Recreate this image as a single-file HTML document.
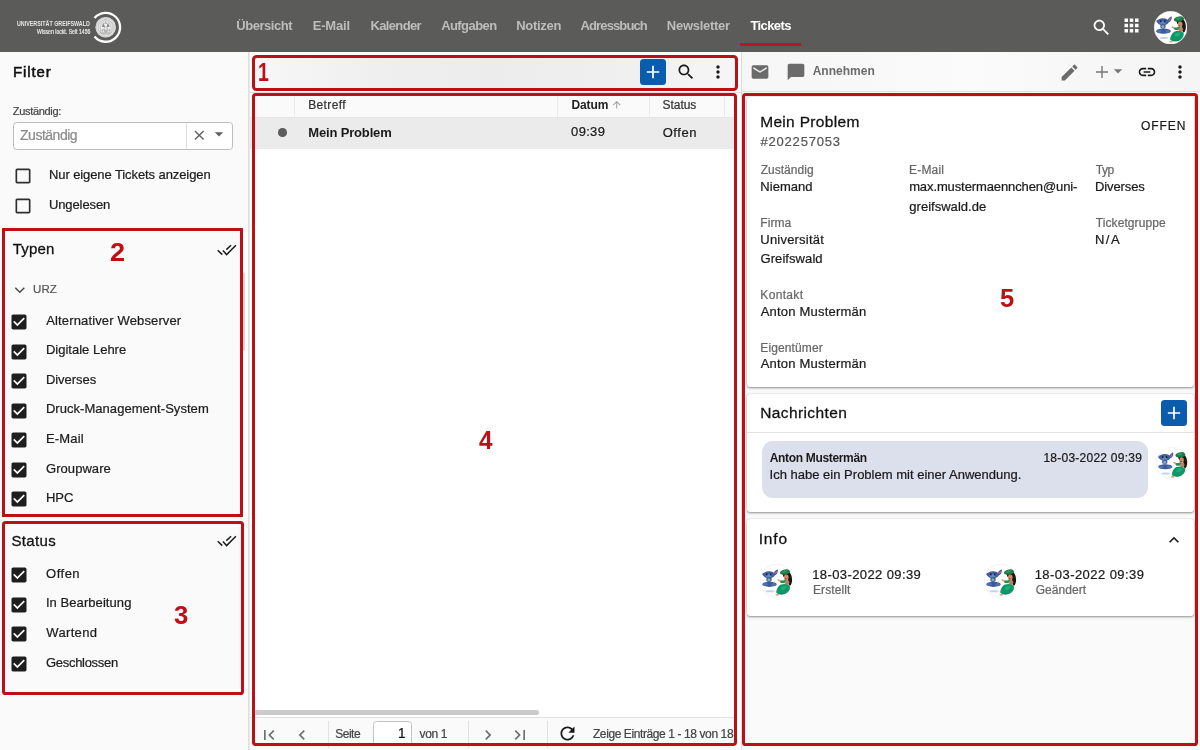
<!DOCTYPE html>
<html lang="de"><head><meta charset="utf-8"><title>Tickets</title>
<style>
*{box-sizing:border-box;margin:0;padding:0}
html,body{width:1200px;height:750px;overflow:hidden;background:#fafafa;font-family:"Liberation Sans",sans-serif;color:#1a1a1a}
.abs{position:absolute}
.t{position:absolute;white-space:pre;line-height:1;-webkit-text-stroke:.22px currentColor}
.t.b{-webkit-text-stroke:0}
.rbox{position:absolute;border:3px solid #be0f17;border-radius:4.5px}
.card{position:absolute;background:#fff;border-radius:3px;box-shadow:0 1px 2.5px rgba(0,0,0,.42),0 0 1px rgba(0,0,0,.25)}
.vline{position:absolute;width:1px;background:#e4e4e4}
</style></head><body>

<div class="abs" style="left:0;top:0;width:1200px;height:51.5px;background:#5b5b5a;box-shadow:0 1px 2px rgba(0,0,0,.35)"></div>
<div class="abs" style="left:740px;top:43px;width:60.5px;height:3px;background:#bc151c"></div>
<svg class="abs" style="left:90px;top:10px" width="36" height="36" viewBox="0 0 36 36">
<defs><filter id="sb" x="-10%" y="-10%" width="120%" height="120%"><feGaussianBlur stdDeviation=".28"/></filter></defs>
<path d="M4.5 8.1 A14.45 14.45 0 1 1 4.5 26.5" fill="none" stroke="#fbfbfb" stroke-width="2.350"/>
<g transform="translate(15.700 17.300)" filter="url(#sb)">
<circle r="10.250" fill="#eeeeee"/>
<circle r="9.200" fill="none" stroke="#b9b9b9" stroke-width="1.100" stroke-dasharray=".7 .55"/>
<circle r="7.700" fill="#e2e2e2" stroke="#9c9c9c" stroke-width=".5"/>
<path d="M-5.200 5.600 L-5.200 -.6 Q-4.600 -5.200 0 -7.400 Q4.600 -5.200 5.200 -.6 L5.200 5.600 Z" fill="#f3f3f3" stroke="#9a9a9a" stroke-width=".45"/>
<path d="M-4 -.4 L-2.300 -4.800 L-.7 -.4 Z M.7 -.4 L2.300 -4.800 L4 -.4 Z" fill="#8c8c8c"/>
<path d="M-1.500 -3.600 L0 -6.600 L1.500 -3.600 Z" fill="#a2a2a2"/>
<ellipse cx="0" cy="2.300" rx="2.300" ry="3.100" fill="#b5b5b5"/>
<ellipse cx="0" cy="1.200" rx="1.100" ry="1.300" fill="#f4f4f4"/>
<path d="M-4.600 3 L-3 1 L-3 5.400 Z M4.600 3 L3 1 L3 5.400 Z" fill="#a8a8a8"/>
<path d="M-4.800 5.800 H4.800" stroke="#999" stroke-width=".6"/>
</g>
</svg>
<svg class="abs" style="left:1091.20px;top:17.40px" width="21" height="21" viewBox="0 0 24 24"><path fill="#fff" d="M15.5 14h-.79l-.28-.27C15.41 12.59 16 11.11 16 9.5 16 5.91 13.09 3 9.5 3S3 5.91 3 9.5 5.91 16 9.5 16c1.61 0 3.09-.59 4.23-1.57l.27.28v.79l5 4.99L20.49 19l-4.99-5zm-6 0C7.01 14 5 11.99 5 9.5S7.01 5 9.5 5 14 7.01 14 9.5 11.99 14 9.5 14z"/></svg>
<svg class="abs" style="left:1120.60px;top:15.00px" width="21" height="21" viewBox="0 0 24 24"><path fill="#fff" d="M4 8h4V4H4v4zm6 12h4v-4h-4v4zm-6 0h4v-4H4v4zm0-6h4v-4H4v4zm6 0h4v-4h-4v4zm6-10v4h4V4h-4zm-6 4h4V4h-4v4zm6 6h4v-4h-4v4zm0 6h4v-4h-4v4z"/></svg>
<svg class="abs" style="left:1153.9px;top:11px" width="33.2" height="33.2" viewBox="0 0 40 40">
<defs><clipPath id="av1"><circle cx="20" cy="20" r="19.6"/></clipPath><filter id="av1b" x="-10%" y="-10%" width="120%" height="120%"><feGaussianBlur stdDeviation=".32"/></filter></defs>
<circle cx="20" cy="20" r="19.8" fill="#fff" stroke="#e9e9e9" stroke-width=".7"/>
<g clip-path="url(#av1)"><g transform="translate(-4.64,-3.55) scale(1.205)" filter="url(#av1b)">
<path d="M17 14.2 Q17.6 9.600 21.300 8.200 Q22.400 10.800 19.600 13.900 Z" fill="#5a5490"/>
<path d="M18.200 13.200 Q18.800 10.400 20.800 9.300 Q21.200 11.200 19.300 13.200 Z" fill="#8d6da3"/>
<path d="M8.600 12.200 Q6.600 10.800 6.100 13.300 Q7.400 15 9 14.300 Z" fill="#48599a"/>
<ellipse cx="12.800" cy="13.600" rx="5.900" ry="3.500" fill="#3f5f9c"/>
<ellipse cx="12.400" cy="14.700" rx="3" ry="1.700" fill="#6486c0"/>
<ellipse cx="10.600" cy="13.300" rx=".9" ry="1.100" fill="#1c2340"/>
<ellipse cx="14.600" cy="13.300" rx=".9" ry="1.100" fill="#1c2340"/>
<ellipse cx="12.800" cy="18.300" rx="2.700" ry="2.500" fill="#46609a"/>
<ellipse cx="12.700" cy="18.600" rx="1.400" ry="1.600" fill="#86a6d6"/>
<ellipse cx="13.300" cy="23.100" rx="7.200" ry="2.600" fill="#3a5a98"/>
<ellipse cx="9.200" cy="23.300" rx="2.400" ry="1.600" fill="#4d70b0"/>
<ellipse cx="17.400" cy="23.300" rx="2.400" ry="1.600" fill="#4d70b0"/>
<ellipse cx="13.800" cy="30" rx="4.600" ry="1" fill="#bfd4ea"/>
<path d="M26.400 13.400 Q25.600 11.600 27.400 11 L33 11 Q36.200 14.500 35.600 20.500 Q35.200 23.400 33.700 24.800 L31.400 22.300 L31.800 18.400 Q27.200 17.600 26.400 13.400 Z" fill="#1b1310"/>
<ellipse cx="28.900" cy="10.900" rx="5.300" ry="2.600" transform="rotate(-12 28.900 10.900)" fill="#1d7a4a"/>
<ellipse cx="28.200" cy="10.400" rx="2.600" ry="1.100" transform="rotate(-12 28.200 10.400)" fill="#2f9a62"/>
<ellipse cx="30" cy="16.200" rx="2.300" ry="2.700" fill="#c98d6c"/>
<ellipse cx="29.500" cy="17.700" rx=".9" ry=".6" fill="#8a2f2a"/>
<ellipse cx="30.600" cy="21.300" rx="2.400" ry="2.400" fill="#bf7f5f"/>
<path d="M29.800 20.200 Q26 21.400 22.200 19" stroke="#cf9777" stroke-width="1.500" fill="none" stroke-linecap="round"/>
<ellipse cx="26.300" cy="20.700" rx="2.500" ry="1.300" fill="#2a8a50"/>
<ellipse cx="28.600" cy="19.500" rx="1.500" ry="1.100" fill="#2f9558"/>
<path d="M24 23.600 Q30 21.400 33.600 25 Q34.200 30 29 32.600 Q23 34.600 20 31.600 Q20 27 24 23.600 Z" fill="#11986a"/>
<path d="M21.500 31.500 Q25 33.500 30 31.500 Q26 34.500 21.500 31.500Z" fill="#0a7550"/>
<ellipse cx="27.500" cy="26.500" rx="3" ry="1.600" transform="rotate(-25 27.500 26.500)" fill="#1fae7c"/>
<ellipse cx="21" cy="33.500" rx="1.800" ry=".9" fill="#dba08a"/>
</g></g></svg>
<div class="abs" style="left:0;top:52px;width:248px;height:698px;background:#fafafa"></div>
<div class="abs" style="left:243px;top:230px;width:5px;height:287px;background:#fefefe"></div>
<div class="abs" style="left:248px;top:52px;width:2.200px;height:698px;background:linear-gradient(90deg,#dadada,#ededed)"></div>
<div class="abs" style="left:13px;top:122px;width:219.5px;height:28px;background:#fff;border:1px solid #bcbcbc;border-radius:3.5px"></div>
<div class="vline" style="left:186px;top:123px;height:26px;background:#dedede"></div>
<svg class="abs" style="left:191.40px;top:126.60px" width="16.5" height="16.5" viewBox="0 0 24 24"><path fill="#5f5f5f" d="M19 6.41L17.59 5 12 10.59 6.41 5 5 6.41 10.59 12 5 17.59 6.41 19 12 13.41 17.59 19 19 17.59 13.41 12z"/></svg>
<svg class="abs" style="left:209.00px;top:124.40px" width="20" height="20" viewBox="0 0 24 24"><path fill="#5f5f5f" d="M7 10l5 5 5-5z"/></svg>
<svg class="abs" style="left:13.10px;top:166.00px" width="20" height="20" viewBox="0 0 24 24"><path fill="#2e2e2e" d="M19 5v14H5V5h14m0-2H5c-1.1 0-2 .9-2 2v14c0 1.1.9 2 2 2h14c1.1 0 2-.9 2-2V5c0-1.1-.9-2-2-2z"/></svg>
<svg class="abs" style="left:13.10px;top:195.60px" width="20" height="20" viewBox="0 0 24 24"><path fill="#2e2e2e" d="M19 5v14H5V5h14m0-2H5c-1.1 0-2 .9-2 2v14c0 1.1.9 2 2 2h14c1.1 0 2-.9 2-2V5c0-1.1-.9-2-2-2z"/></svg>
<div class="abs" style="left:239.6px;top:272px;width:5.2px;height:79px;background:#d2d2d2;border-radius:2.5px"></div>
<svg class="abs" style="left:215px;top:243px" width="24" height="14" viewBox="0 0 24 14"><path d="M2.700 7.300 L7.300 11.600 M7.900 7.600 L11.600 11.600 L20.900 2.200 M11.300 6.600 L16.100 2.300" fill="none" stroke="#1a1a1a" stroke-width="1.450"/></svg>
<svg class="abs" style="left:215px;top:534.4px" width="24" height="14" viewBox="0 0 24 14"><path d="M2.700 7.300 L7.300 11.600 M7.900 7.600 L11.600 11.600 L20.900 2.200 M11.300 6.600 L16.100 2.300" fill="none" stroke="#1a1a1a" stroke-width="1.450"/></svg>
<svg class="abs" style="left:14px;top:285px" width="12" height="10" viewBox="0 0 12 10"><path d="M1.300 2.800 L5.800 7.200 L10.300 2.800" fill="none" stroke="#4a4a4a" stroke-width="1.500"/></svg>
<svg class="abs" style="left:9.30px;top:312.00px" width="20" height="20" viewBox="0 0 24 24"><path fill="#1e1e1e" d="M19 3H5c-1.11 0-2 .9-2 2v14c0 1.1.89 2 2 2h14c1.11 0 2-.9 2-2V5c0-1.1-.89-2-2-2zm-9 14l-5-5 1.41-1.41L10 14.17l7.59-7.59L19 8l-9 9z"/></svg>
<svg class="abs" style="left:9.30px;top:341.90px" width="20" height="20" viewBox="0 0 24 24"><path fill="#1e1e1e" d="M19 3H5c-1.11 0-2 .9-2 2v14c0 1.1.89 2 2 2h14c1.11 0 2-.9 2-2V5c0-1.1-.89-2-2-2zm-9 14l-5-5 1.41-1.41L10 14.17l7.59-7.59L19 8l-9 9z"/></svg>
<svg class="abs" style="left:9.30px;top:371.20px" width="20" height="20" viewBox="0 0 24 24"><path fill="#1e1e1e" d="M19 3H5c-1.11 0-2 .9-2 2v14c0 1.1.89 2 2 2h14c1.11 0 2-.9 2-2V5c0-1.1-.89-2-2-2zm-9 14l-5-5 1.41-1.41L10 14.17l7.59-7.59L19 8l-9 9z"/></svg>
<svg class="abs" style="left:9.30px;top:401.10px" width="20" height="20" viewBox="0 0 24 24"><path fill="#1e1e1e" d="M19 3H5c-1.11 0-2 .9-2 2v14c0 1.1.89 2 2 2h14c1.11 0 2-.9 2-2V5c0-1.1-.89-2-2-2zm-9 14l-5-5 1.41-1.41L10 14.17l7.59-7.59L19 8l-9 9z"/></svg>
<svg class="abs" style="left:9.30px;top:430.20px" width="20" height="20" viewBox="0 0 24 24"><path fill="#1e1e1e" d="M19 3H5c-1.11 0-2 .9-2 2v14c0 1.1.89 2 2 2h14c1.11 0 2-.9 2-2V5c0-1.1-.89-2-2-2zm-9 14l-5-5 1.41-1.41L10 14.17l7.59-7.59L19 8l-9 9z"/></svg>
<svg class="abs" style="left:9.30px;top:460.10px" width="20" height="20" viewBox="0 0 24 24"><path fill="#1e1e1e" d="M19 3H5c-1.11 0-2 .9-2 2v14c0 1.1.89 2 2 2h14c1.11 0 2-.9 2-2V5c0-1.1-.89-2-2-2zm-9 14l-5-5 1.41-1.41L10 14.17l7.59-7.59L19 8l-9 9z"/></svg>
<svg class="abs" style="left:9.30px;top:489.40px" width="20" height="20" viewBox="0 0 24 24"><path fill="#1e1e1e" d="M19 3H5c-1.11 0-2 .9-2 2v14c0 1.1.89 2 2 2h14c1.11 0 2-.9 2-2V5c0-1.1-.89-2-2-2zm-9 14l-5-5 1.41-1.41L10 14.17l7.59-7.59L19 8l-9 9z"/></svg>
<svg class="abs" style="left:9.30px;top:565.20px" width="20" height="20" viewBox="0 0 24 24"><path fill="#1e1e1e" d="M19 3H5c-1.11 0-2 .9-2 2v14c0 1.1.89 2 2 2h14c1.11 0 2-.9 2-2V5c0-1.1-.89-2-2-2zm-9 14l-5-5 1.41-1.41L10 14.17l7.59-7.59L19 8l-9 9z"/></svg>
<svg class="abs" style="left:9.30px;top:594.90px" width="20" height="20" viewBox="0 0 24 24"><path fill="#1e1e1e" d="M19 3H5c-1.11 0-2 .9-2 2v14c0 1.1.89 2 2 2h14c1.11 0 2-.9 2-2V5c0-1.1-.89-2-2-2zm-9 14l-5-5 1.41-1.41L10 14.17l7.59-7.59L19 8l-9 9z"/></svg>
<svg class="abs" style="left:9.30px;top:624.10px" width="20" height="20" viewBox="0 0 24 24"><path fill="#1e1e1e" d="M19 3H5c-1.11 0-2 .9-2 2v14c0 1.1.89 2 2 2h14c1.11 0 2-.9 2-2V5c0-1.1-.89-2-2-2zm-9 14l-5-5 1.41-1.41L10 14.17l7.59-7.59L19 8l-9 9z"/></svg>
<svg class="abs" style="left:9.30px;top:653.90px" width="20" height="20" viewBox="0 0 24 24"><path fill="#1e1e1e" d="M19 3H5c-1.11 0-2 .9-2 2v14c0 1.1.89 2 2 2h14c1.11 0 2-.9 2-2V5c0-1.1-.89-2-2-2zm-9 14l-5-5 1.41-1.41L10 14.17l7.59-7.59L19 8l-9 9z"/></svg>
<div class="abs" style="left:250px;top:52px;width:490.500px;height:698px;background:#fff"></div>
<div class="abs" style="left:250px;top:52px;width:490.500px;height:40px;background:#fff"></div>
<div class="abs" style="left:250px;top:91.5px;width:490.500px;height:1px;background:#e2e2e2"></div>
<div class="rbox" style="left:252.2px;top:55.2px;width:485.8px;height:35.4px;border-radius:4.5px;background:linear-gradient(90deg,#f7f7f7 0%,#efefef 25%,#ececec 50%,#f0f0f0 80%,#f6f6f6 100%)"></div>
<div class="abs" style="left:250px;top:92.5px;width:484.500px;height:25px;background:#fafafa;border-bottom:1px solid #e6e6e6"></div>
<div class="vline" style="left:294.2px;top:94px;height:23.500px;background:#e9e9e9"></div>
<div class="vline" style="left:557px;top:94px;height:23.500px;background:#e9e9e9"></div>
<div class="vline" style="left:649px;top:94px;height:23.500px;background:#e9e9e9"></div>
<div class="vline" style="left:724px;top:94px;height:23.500px;background:#e9e9e9"></div>
<div class="abs" style="left:250px;top:117.500px;width:484.500px;height:31.500px;background:#ebebeb"></div>
<div class="abs" style="left:278.200px;top:128.400px;width:8.600px;height:8.600px;border-radius:50%;background:#5c5c5c"></div>
<svg class="abs" style="left:611.00px;top:99.20px" width="11.5" height="11.5" viewBox="0 0 24 24"><path fill="#9a9a9a" d="M4 12l1.41 1.41L11 7.83V20h2V7.83l5.58 5.59L20 12l-8-8-8 8z"/></svg>
<div class="abs" style="left:639.6px;top:59px;width:26px;height:26px;border-radius:3.5px;background:#0b5cad"></div>
<svg class="abs" style="left:639.6px;top:59px" width="26" height="26" viewBox="0 0 26 26"><path d="M13 6.800 V19.200 M6.800 13 H19.200" stroke="#fff" stroke-width="1.700" fill="none"/></svg>
<svg class="abs" style="left:675.60px;top:62.40px" width="20" height="20" viewBox="0 0 24 24"><path fill="#1a1a1a" d="M15.5 14h-.79l-.28-.27C15.41 12.59 16 11.11 16 9.5 16 5.91 13.09 3 9.5 3S3 5.91 3 9.5 5.91 16 9.5 16c1.61 0 3.09-.59 4.23-1.57l.27.28v.79l5 4.99L20.49 19l-4.99-5zm-6 0C7.01 14 5 11.99 5 9.5S7.01 5 9.5 5 14 7.01 14 9.5 11.99 14 9.5 14z"/></svg>
<svg class="abs" style="left:707.70px;top:61.70px" width="20" height="20" viewBox="0 0 24 24"><path fill="#1a1a1a" d="M12 8c1.1 0 2-.9 2-2s-.9-2-2-2-2 .9-2 2 .9 2 2 2zm0 2c-1.1 0-2 .9-2 2s.9 2 2 2 2-.9 2-2-.9-2-2-2zm0 6c-1.1 0-2 .9-2 2s.9 2 2 2 2-.9 2-2-.9-2-2-2z"/></svg>
<div class="abs" style="left:253px;top:710.200px;width:286px;height:4.600px;background:#cbcbcb;border-radius:2.3px"></div>
<div class="abs" style="left:250px;top:716.500px;width:484px;height:33.500px;background:#fafafa;border-top:1px solid #e2e2e2"></div>
<div class="vline" style="left:328.4px;top:721px;height:27px;background:#e2e2e2"></div>
<div class="vline" style="left:467.5px;top:721px;height:27px;background:#e2e2e2"></div>
<div class="vline" style="left:546.8px;top:721px;height:27px;background:#e2e2e2"></div>
<div class="abs" style="left:373.200px;top:721.200px;width:39.200px;height:25.200px;background:#fff;border:1px solid #c4c4c4;border-radius:3.5px"></div>
<svg class="abs" style="left:259.10px;top:724.50px" width="20" height="20" viewBox="0 0 24 24"><path fill="#6e6e6e" d="M18.41 16.59L13.82 12l4.59-4.59L17 6l-6 6 6 6zM6 6h2v12H6z"/></svg>
<svg class="abs" style="left:292.30px;top:724.50px" width="20" height="20" viewBox="0 0 24 24"><path fill="#6e6e6e" d="M15.41 7.41L14 6l-6 6 6 6 1.41-1.41L10.83 12z"/></svg>
<svg class="abs" style="left:477.50px;top:724.50px" width="20" height="20" viewBox="0 0 24 24"><path fill="#6e6e6e" d="M10 6L8.59 7.41 13.17 12l-4.58 4.59L10 18l6-6z"/></svg>
<svg class="abs" style="left:510.00px;top:724.50px" width="20" height="20" viewBox="0 0 24 24"><path fill="#6e6e6e" d="M5.59 7.41L10.18 12l-4.59 4.59L7 18l6-6-6-6zM16 6h2v12h-2z"/></svg>
<svg class="abs" style="left:556.70px;top:723.40px" width="21" height="21" viewBox="0 0 24 24"><path fill="#1a1a1a" d="M17.65 6.35C16.2 4.9 14.21 4 12 4c-4.42 0-7.99 3.58-7.99 8s3.57 8 7.99 8c3.73 0 6.84-2.55 7.73-6h-2.08c-.82 2.33-3.04 4-5.65 4-3.31 0-6-2.69-6-6s2.69-6 6-6c1.66 0 3.14.69 4.22 1.78L13 11h7V4l-2.35 2.35z"/></svg>
<div class="abs" style="left:740.500px;top:52px;width:459.500px;height:698px;background:#fafafa;border-left:1px solid #dcdcdc"></div>
<div class="abs" style="left:741.500px;top:52px;width:458.500px;height:39.500px;background:linear-gradient(90deg,#f6f6f6 0%,#f8f8f8 25%,#fbfbfb 50%,#f6f6f6 80%,#f5f5f5 100%);border-bottom:1px solid #dedede"></div>
<svg class="abs" style="left:750.30px;top:61.70px" width="20" height="20" viewBox="0 0 24 24"><path fill="#6b6b6b" d="M20 4H4c-1.1 0-1.99.9-1.99 2L2 18c0 1.1.9 2 2 2h16c1.1 0 2-.9 2-2V6c0-1.1-.9-2-2-2zm0 4l-8 5-8-5V6l8 5 8-5v2z"/></svg>
<svg class="abs" style="left:786.30px;top:61.80px" width="20" height="20" viewBox="0 0 24 24"><path fill="#6b6b6b" d="M20 2H4c-1.1 0-2 .9-2 2v18l4-4h14c1.1 0 2-.9 2-2V4c0-1.1-.9-2-2-2z"/></svg>
<svg class="abs" style="left:1058.80px;top:61.90px" width="21" height="21" viewBox="0 0 24 24"><path fill="#6b6b6b" d="M3 17.25V21h3.75L17.81 9.94l-3.75-3.75L3 17.25zM20.71 7.04c.39-.39.39-1.02 0-1.41l-2.34-2.34c-.39-.39-1.02-.39-1.41 0l-1.83 1.83 3.75 3.75 1.83-1.83z"/></svg>
<svg class="abs" style="left:1091.700px;top:61.800px" width="20" height="20" viewBox="0 0 20 20"><path d="M10 4 V16 M4 10 H16" stroke="#777" stroke-width="1.400" fill="none"/></svg>
<svg class="abs" style="left:1108.00px;top:61.40px" width="20" height="20" viewBox="0 0 24 24"><path fill="#777" d="M7 10l5 5 5-5z"/></svg>
<svg class="abs" style="left:1137.30px;top:61.60px" width="20" height="20" viewBox="0 0 24 24"><path fill="#1a1a1a" d="M3.9 12c0-1.71 1.39-3.1 3.1-3.1h4V7H7c-2.76 0-5 2.24-5 5s2.24 5 5 5h4v-1.9H7c-1.71 0-3.1-1.39-3.1-3.1zM8 13h8v-2H8v2zm9-6h-4v1.9h4c1.71 0 3.1 1.39 3.1 3.1s-1.39 3.1-3.1 3.1h-4V17h4c2.76 0 5-2.24 5-5s-2.24-5-5-5z"/></svg>
<svg class="abs" style="left:1170.00px;top:61.80px" width="20" height="20" viewBox="0 0 24 24"><path fill="#1a1a1a" d="M12 8c1.1 0 2-.9 2-2s-.9-2-2-2-2 .9-2 2 .9 2 2 2zm0 2c-1.1 0-2 .9-2 2s.9 2 2 2 2-.9 2-2-.9-2-2-2zm0 6c-1.1 0-2 .9-2 2s.9 2 2 2 2-.9 2-2-.9-2-2-2z"/></svg>
<div class="card" style="left:747px;top:97px;width:447px;height:289.500px"></div>
<div class="card" style="left:747px;top:394px;width:447px;height:118px"></div>
<div class="abs" style="left:747px;top:432.300px;width:447px;height:1px;background:#e2e2e2"></div>
<div class="card" style="left:747px;top:519px;width:447px;height:97px"></div>
<div class="abs" style="left:762px;top:440.600px;width:386.200px;height:57.200px;background:#dcdfec;border-radius:11px"></div>
<div class="abs" style="left:1160.500px;top:400.200px;width:26.400px;height:26.200px;border-radius:3.500px;background:#0b5cad"></div>
<svg class="abs" style="left:1160.700px;top:400.300px" width="26" height="26" viewBox="0 0 26 26"><path d="M13 6.800 V19.200 M6.800 13 H19.200" stroke="#fff" stroke-width="1.700" fill="none"/></svg>
<svg class="abs" style="left:1156.15px;top:446.55px" width="32.5" height="32.5" viewBox="0 0 40 40">
<defs><clipPath id="av2"><circle cx="20" cy="20" r="19.6"/></clipPath><filter id="av2b" x="-10%" y="-10%" width="120%" height="120%"><feGaussianBlur stdDeviation=".32"/></filter></defs>
<circle cx="20" cy="20" r="19.8" fill="#fff" stroke="#e9e9e9" stroke-width=".7"/>
<g clip-path="url(#av2)"><g transform="translate(-4.64,-3.55) scale(1.205)" filter="url(#av2b)">
<path d="M17 14.2 Q17.6 9.600 21.300 8.200 Q22.400 10.800 19.600 13.900 Z" fill="#5a5490"/>
<path d="M18.200 13.200 Q18.800 10.400 20.800 9.300 Q21.200 11.200 19.300 13.200 Z" fill="#8d6da3"/>
<path d="M8.600 12.200 Q6.600 10.800 6.100 13.300 Q7.400 15 9 14.300 Z" fill="#48599a"/>
<ellipse cx="12.800" cy="13.600" rx="5.900" ry="3.500" fill="#3f5f9c"/>
<ellipse cx="12.400" cy="14.700" rx="3" ry="1.700" fill="#6486c0"/>
<ellipse cx="10.600" cy="13.300" rx=".9" ry="1.100" fill="#1c2340"/>
<ellipse cx="14.600" cy="13.300" rx=".9" ry="1.100" fill="#1c2340"/>
<ellipse cx="12.800" cy="18.300" rx="2.700" ry="2.500" fill="#46609a"/>
<ellipse cx="12.700" cy="18.600" rx="1.400" ry="1.600" fill="#86a6d6"/>
<ellipse cx="13.300" cy="23.100" rx="7.200" ry="2.600" fill="#3a5a98"/>
<ellipse cx="9.200" cy="23.300" rx="2.400" ry="1.600" fill="#4d70b0"/>
<ellipse cx="17.400" cy="23.300" rx="2.400" ry="1.600" fill="#4d70b0"/>
<ellipse cx="13.800" cy="30" rx="4.600" ry="1" fill="#bfd4ea"/>
<path d="M26.400 13.400 Q25.600 11.600 27.400 11 L33 11 Q36.200 14.500 35.600 20.500 Q35.200 23.400 33.700 24.800 L31.400 22.300 L31.800 18.400 Q27.200 17.600 26.400 13.400 Z" fill="#1b1310"/>
<ellipse cx="28.900" cy="10.900" rx="5.300" ry="2.600" transform="rotate(-12 28.900 10.900)" fill="#1d7a4a"/>
<ellipse cx="28.200" cy="10.400" rx="2.600" ry="1.100" transform="rotate(-12 28.200 10.400)" fill="#2f9a62"/>
<ellipse cx="30" cy="16.200" rx="2.300" ry="2.700" fill="#c98d6c"/>
<ellipse cx="29.500" cy="17.700" rx=".9" ry=".6" fill="#8a2f2a"/>
<ellipse cx="30.600" cy="21.300" rx="2.400" ry="2.400" fill="#bf7f5f"/>
<path d="M29.800 20.200 Q26 21.400 22.200 19" stroke="#cf9777" stroke-width="1.500" fill="none" stroke-linecap="round"/>
<ellipse cx="26.300" cy="20.700" rx="2.500" ry="1.300" fill="#2a8a50"/>
<ellipse cx="28.600" cy="19.500" rx="1.500" ry="1.100" fill="#2f9558"/>
<path d="M24 23.600 Q30 21.400 33.600 25 Q34.200 30 29 32.600 Q23 34.600 20 31.600 Q20 27 24 23.600 Z" fill="#11986a"/>
<path d="M21.500 31.500 Q25 33.500 30 31.500 Q26 34.500 21.500 31.500Z" fill="#0a7550"/>
<ellipse cx="27.500" cy="26.500" rx="3" ry="1.600" transform="rotate(-25 27.500 26.500)" fill="#1fae7c"/>
<ellipse cx="21" cy="33.500" rx="1.800" ry=".9" fill="#dba08a"/>
</g></g></svg>
<svg class="abs" style="left:760px;top:563.9px" width="33.4" height="33.4" viewBox="0 0 40 40">
<defs><clipPath id="av3"><circle cx="20" cy="20" r="19.6"/></clipPath><filter id="av3b" x="-10%" y="-10%" width="120%" height="120%"><feGaussianBlur stdDeviation=".32"/></filter></defs>
<circle cx="20" cy="20" r="19.8" fill="#fff" stroke="#e9e9e9" stroke-width=".7"/>
<g clip-path="url(#av3)"><g transform="translate(-4.64,-3.55) scale(1.205)" filter="url(#av3b)">
<path d="M17 14.2 Q17.6 9.600 21.300 8.200 Q22.400 10.800 19.600 13.900 Z" fill="#5a5490"/>
<path d="M18.200 13.200 Q18.800 10.400 20.800 9.300 Q21.200 11.200 19.300 13.200 Z" fill="#8d6da3"/>
<path d="M8.600 12.200 Q6.600 10.800 6.100 13.300 Q7.400 15 9 14.300 Z" fill="#48599a"/>
<ellipse cx="12.800" cy="13.600" rx="5.900" ry="3.500" fill="#3f5f9c"/>
<ellipse cx="12.400" cy="14.700" rx="3" ry="1.700" fill="#6486c0"/>
<ellipse cx="10.600" cy="13.300" rx=".9" ry="1.100" fill="#1c2340"/>
<ellipse cx="14.600" cy="13.300" rx=".9" ry="1.100" fill="#1c2340"/>
<ellipse cx="12.800" cy="18.300" rx="2.700" ry="2.500" fill="#46609a"/>
<ellipse cx="12.700" cy="18.600" rx="1.400" ry="1.600" fill="#86a6d6"/>
<ellipse cx="13.300" cy="23.100" rx="7.200" ry="2.600" fill="#3a5a98"/>
<ellipse cx="9.200" cy="23.300" rx="2.400" ry="1.600" fill="#4d70b0"/>
<ellipse cx="17.400" cy="23.300" rx="2.400" ry="1.600" fill="#4d70b0"/>
<ellipse cx="13.800" cy="30" rx="4.600" ry="1" fill="#bfd4ea"/>
<path d="M26.400 13.400 Q25.600 11.600 27.400 11 L33 11 Q36.200 14.500 35.600 20.500 Q35.200 23.400 33.700 24.800 L31.400 22.300 L31.800 18.400 Q27.200 17.600 26.400 13.400 Z" fill="#1b1310"/>
<ellipse cx="28.900" cy="10.900" rx="5.300" ry="2.600" transform="rotate(-12 28.900 10.900)" fill="#1d7a4a"/>
<ellipse cx="28.200" cy="10.400" rx="2.600" ry="1.100" transform="rotate(-12 28.200 10.400)" fill="#2f9a62"/>
<ellipse cx="30" cy="16.200" rx="2.300" ry="2.700" fill="#c98d6c"/>
<ellipse cx="29.500" cy="17.700" rx=".9" ry=".6" fill="#8a2f2a"/>
<ellipse cx="30.600" cy="21.300" rx="2.400" ry="2.400" fill="#bf7f5f"/>
<path d="M29.800 20.200 Q26 21.400 22.200 19" stroke="#cf9777" stroke-width="1.500" fill="none" stroke-linecap="round"/>
<ellipse cx="26.300" cy="20.700" rx="2.500" ry="1.300" fill="#2a8a50"/>
<ellipse cx="28.600" cy="19.500" rx="1.500" ry="1.100" fill="#2f9558"/>
<path d="M24 23.600 Q30 21.400 33.600 25 Q34.200 30 29 32.600 Q23 34.600 20 31.600 Q20 27 24 23.600 Z" fill="#11986a"/>
<path d="M21.500 31.500 Q25 33.500 30 31.500 Q26 34.500 21.500 31.500Z" fill="#0a7550"/>
<ellipse cx="27.500" cy="26.500" rx="3" ry="1.600" transform="rotate(-25 27.500 26.500)" fill="#1fae7c"/>
<ellipse cx="21" cy="33.500" rx="1.800" ry=".9" fill="#dba08a"/>
</g></g></svg>
<svg class="abs" style="left:983.9px;top:563.9px" width="33.4" height="33.4" viewBox="0 0 40 40">
<defs><clipPath id="av4"><circle cx="20" cy="20" r="19.6"/></clipPath><filter id="av4b" x="-10%" y="-10%" width="120%" height="120%"><feGaussianBlur stdDeviation=".32"/></filter></defs>
<circle cx="20" cy="20" r="19.8" fill="#fff" stroke="#e9e9e9" stroke-width=".7"/>
<g clip-path="url(#av4)"><g transform="translate(-4.64,-3.55) scale(1.205)" filter="url(#av4b)">
<path d="M17 14.2 Q17.6 9.600 21.300 8.200 Q22.400 10.800 19.600 13.900 Z" fill="#5a5490"/>
<path d="M18.200 13.200 Q18.800 10.400 20.800 9.300 Q21.200 11.200 19.300 13.200 Z" fill="#8d6da3"/>
<path d="M8.600 12.200 Q6.600 10.800 6.100 13.300 Q7.400 15 9 14.300 Z" fill="#48599a"/>
<ellipse cx="12.800" cy="13.600" rx="5.900" ry="3.500" fill="#3f5f9c"/>
<ellipse cx="12.400" cy="14.700" rx="3" ry="1.700" fill="#6486c0"/>
<ellipse cx="10.600" cy="13.300" rx=".9" ry="1.100" fill="#1c2340"/>
<ellipse cx="14.600" cy="13.300" rx=".9" ry="1.100" fill="#1c2340"/>
<ellipse cx="12.800" cy="18.300" rx="2.700" ry="2.500" fill="#46609a"/>
<ellipse cx="12.700" cy="18.600" rx="1.400" ry="1.600" fill="#86a6d6"/>
<ellipse cx="13.300" cy="23.100" rx="7.200" ry="2.600" fill="#3a5a98"/>
<ellipse cx="9.200" cy="23.300" rx="2.400" ry="1.600" fill="#4d70b0"/>
<ellipse cx="17.400" cy="23.300" rx="2.400" ry="1.600" fill="#4d70b0"/>
<ellipse cx="13.800" cy="30" rx="4.600" ry="1" fill="#bfd4ea"/>
<path d="M26.400 13.400 Q25.600 11.600 27.400 11 L33 11 Q36.200 14.500 35.600 20.500 Q35.200 23.400 33.700 24.800 L31.400 22.300 L31.800 18.400 Q27.200 17.600 26.400 13.400 Z" fill="#1b1310"/>
<ellipse cx="28.900" cy="10.900" rx="5.300" ry="2.600" transform="rotate(-12 28.900 10.900)" fill="#1d7a4a"/>
<ellipse cx="28.200" cy="10.400" rx="2.600" ry="1.100" transform="rotate(-12 28.200 10.400)" fill="#2f9a62"/>
<ellipse cx="30" cy="16.200" rx="2.300" ry="2.700" fill="#c98d6c"/>
<ellipse cx="29.500" cy="17.700" rx=".9" ry=".6" fill="#8a2f2a"/>
<ellipse cx="30.600" cy="21.300" rx="2.400" ry="2.400" fill="#bf7f5f"/>
<path d="M29.800 20.200 Q26 21.400 22.200 19" stroke="#cf9777" stroke-width="1.500" fill="none" stroke-linecap="round"/>
<ellipse cx="26.300" cy="20.700" rx="2.500" ry="1.300" fill="#2a8a50"/>
<ellipse cx="28.600" cy="19.500" rx="1.500" ry="1.100" fill="#2f9558"/>
<path d="M24 23.600 Q30 21.400 33.600 25 Q34.200 30 29 32.600 Q23 34.600 20 31.600 Q20 27 24 23.600 Z" fill="#11986a"/>
<path d="M21.500 31.500 Q25 33.500 30 31.500 Q26 34.500 21.500 31.500Z" fill="#0a7550"/>
<ellipse cx="27.500" cy="26.500" rx="3" ry="1.600" transform="rotate(-25 27.500 26.500)" fill="#1fae7c"/>
<ellipse cx="21" cy="33.500" rx="1.800" ry=".9" fill="#dba08a"/>
</g></g></svg>
<svg class="abs" style="left:1163.70px;top:529.60px" width="20" height="20" viewBox="0 0 24 24"><path fill="#1a1a1a" d="M12 8l-6 6 1.41 1.41L12 10.83l4.59 4.58L18 14z"/></svg>
<div class="rbox" style="left:252.2px;top:93px;width:484.8px;height:652.8px;border-radius:3.8px;"></div>
<div class="rbox" style="left:2px;top:227.8px;width:241px;height:289.7px;border-radius:0.6px;"></div>
<div class="rbox" style="left:2px;top:521.2px;width:241.9px;height:174.1px;border-radius:3.6px;"></div>
<div class="rbox" style="left:741.5px;top:93px;width:456.5px;height:652.8px;border-radius:3.6px;"></div>
<div style="position:absolute;left:0;top:0;width:1200px;height:750px;will-change:transform">
<div class="t b" style="left:236.23px;top:19.41px;font-size:13px;color:#bdbdbd;font-weight:bold;letter-spacing:-0.461px;">Übersicht</div>
<div class="t b" style="left:312.68px;top:19.41px;font-size:13px;color:#bdbdbd;font-weight:bold;letter-spacing:-0.181px;">E-Mail</div>
<div class="t b" style="left:370.43px;top:19.41px;font-size:13px;color:#bdbdbd;font-weight:bold;letter-spacing:-0.629px;">Kalender</div>
<div class="t b" style="left:441.17px;top:19.41px;font-size:13px;color:#bdbdbd;font-weight:bold;letter-spacing:-0.568px;">Aufgaben</div>
<div class="t b" style="left:516.17px;top:19.41px;font-size:13px;color:#bdbdbd;font-weight:bold;letter-spacing:-0.265px;">Notizen</div>
<div class="t b" style="left:580.47px;top:19.41px;font-size:13px;color:#bdbdbd;font-weight:bold;letter-spacing:-0.865px;">Adressbuch</div>
<div class="t b" style="left:666.87px;top:19.41px;font-size:13px;color:#bdbdbd;font-weight:bold;letter-spacing:-0.289px;">Newsletter</div>
<div class="t b" style="left:750.50px;top:19.41px;font-size:13px;color:#ffffff;font-weight:bold;letter-spacing:-0.615px;">Tickets</div>
<div class="t b" style="left:17.35px;top:19.78px;font-size:7.6px;color:#e6e6e6;font-weight:bold;transform-origin:0 0;transform:scaleX(0.7049);">UNIVERSITÄT GREIFSWALD</div>
<div class="t" style="left:36.99px;top:28.59px;font-size:6.4px;color:#e6e6e6;transform-origin:0 0;transform:scaleX(0.8030);">Wissen lockt. Seit 1456</div>
<div class="t" style="left:13.09px;top:63.92px;font-size:15px;color:#111;letter-spacing:0.884px;-webkit-text-stroke:.55px #111;">Filter</div>
<div class="t" style="left:12.87px;top:105.91px;font-size:11px;color:#444;letter-spacing:-0.323px;">Zuständig:</div>
<div class="t" style="left:20.05px;top:127.97px;font-size:14px;color:#8a8a8a;letter-spacing:-0.494px;">Zuständig</div>
<div class="t" style="left:48.95px;top:168.21px;font-size:13px;color:#1c1c1c;letter-spacing:-0.089px;">Nur eigene Tickets anzeigen</div>
<div class="t" style="left:48.95px;top:197.81px;font-size:13px;color:#1c1c1c;letter-spacing:-0.103px;">Ungelesen</div>
<div class="t" style="left:12.83px;top:241.12px;font-size:15px;color:#111;letter-spacing:0.160px;-webkit-text-stroke:.3px #111;">Typen</div>
<div class="t" style="left:32.94px;top:283.68px;font-size:11.5px;color:#555;letter-spacing:0.155px;">URZ</div>
<div class="t" style="left:46.27px;top:314.01px;font-size:13px;color:#1c1c1c;letter-spacing:0.141px;">Alternativer Webserver</div>
<div class="t" style="left:45.90px;top:343.41px;font-size:13px;color:#1c1c1c;letter-spacing:0.006px;">Digitale Lehre</div>
<div class="t" style="left:45.90px;top:373.21px;font-size:13px;color:#1c1c1c;letter-spacing:-0.038px;">Diverses</div>
<div class="t" style="left:45.90px;top:402.41px;font-size:13px;color:#1c1c1c;letter-spacing:0.045px;">Druck-Management-System</div>
<div class="t" style="left:45.90px;top:432.21px;font-size:13px;color:#1c1c1c;letter-spacing:0.200px;">E-Mail</div>
<div class="t" style="left:46.04px;top:461.51px;font-size:13px;color:#1c1c1c;letter-spacing:0.054px;">Groupware</div>
<div class="t" style="left:45.90px;top:491.21px;font-size:13px;color:#1c1c1c;letter-spacing:-0.013px;">HPC</div>
<div class="t" style="left:11.51px;top:532.73px;font-size:15px;color:#111;letter-spacing:0.344px;-webkit-text-stroke:.3px #111;">Status</div>
<div class="t" style="left:46.07px;top:566.81px;font-size:13px;color:#1c1c1c;letter-spacing:0.494px;">Offen</div>
<div class="t" style="left:45.90px;top:596.41px;font-size:13px;color:#1c1c1c;letter-spacing:0.070px;">In Bearbeitung</div>
<div class="t" style="left:46.26px;top:626.22px;font-size:13px;color:#1c1c1c;letter-spacing:0.346px;">Wartend</div>
<div class="t" style="left:46.04px;top:655.51px;font-size:13px;color:#1c1c1c;letter-spacing:-0.300px;">Geschlossen</div>
<div class="t b" style="left:258.00px;top:59.98px;font-size:25px;color:#be0f17;font-weight:bold;transform-origin:0 0;transform:scaleX(0.7807);">1</div>
<div class="t b" style="left:109.97px;top:239.68px;font-size:25px;color:#be0f17;font-weight:bold;transform-origin:0 0;transform:scaleX(1.0825);">2</div>
<div class="t b" style="left:173.89px;top:603.27px;font-size:25px;color:#be0f17;font-weight:bold;transform-origin:0 0;transform:scaleX(1.0290);">3</div>
<div class="t b" style="left:479.37px;top:427.77px;font-size:25px;color:#be0f17;font-weight:bold;transform-origin:0 0;transform:scaleX(0.9709);">4</div>
<div class="t b" style="left:999.61px;top:286.47px;font-size:25px;color:#be0f17;font-weight:bold;transform-origin:0 0;transform:scaleX(1.0228);">5</div>
<div class="t" style="left:308.15px;top:99.06px;font-size:12px;color:#333;letter-spacing:0.399px;">Betreff</div>
<div class="t b" style="left:571.45px;top:99.06px;font-size:12px;color:#222;font-weight:bold;letter-spacing:-0.107px;">Datum</div>
<div class="t" style="left:662.60px;top:99.06px;font-size:12px;color:#333;letter-spacing:-0.054px;">Status</div>
<div class="t b" style="left:308.28px;top:126.02px;font-size:13px;color:#1a1a1a;font-weight:bold;letter-spacing:-0.162px;">Mein Problem</div>
<div class="t" style="left:571.10px;top:125.32px;font-size:13px;color:#1a1a1a;letter-spacing:0.316px;">09:39</div>
<div class="t" style="left:662.72px;top:126.02px;font-size:13px;color:#1a1a1a;letter-spacing:0.519px;">Offen</div>
<div class="t" style="left:335.30px;top:728.06px;font-size:12px;color:#444;letter-spacing:-0.513px;">Seite</div>
<div class="t" style="left:397.60px;top:726.37px;font-size:14px;color:#111;transform-origin:0 0;transform:scaleX(0.9679);">1</div>
<div class="t" style="left:419.56px;top:728.06px;font-size:12px;color:#444;letter-spacing:-0.385px;">von 1</div>
<div class="t" style="left:592.93px;top:728.06px;font-size:12px;color:#444;letter-spacing:-0.400px;">Zeige Einträge 1 - 18 von 18</div>
<div class="t b" style="left:812.70px;top:65.26px;font-size:12px;color:#6b6b6b;font-weight:bold;letter-spacing:0.007px;">Annehmen</div>
<div class="t" style="left:760.20px;top:113.90px;font-size:15.5px;color:#111;letter-spacing:0.317px;-webkit-text-stroke:.28px #111;">Mein Problem</div>
<div class="t" style="left:760.57px;top:135.22px;font-size:13px;color:#555;letter-spacing:0.783px;">#202257053</div>
<div class="t" style="left:1141.02px;top:119.96px;font-size:12px;color:#1a1a1a;letter-spacing:0.940px;">OFFEN</div>
<div class="t" style="left:760.63px;top:164.46px;font-size:12px;color:#666;letter-spacing:0.031px;">Zuständig</div>
<div class="t" style="left:760.35px;top:180.22px;font-size:13px;color:#1a1a1a;letter-spacing:0.010px;">Niemand</div>
<div class="t" style="left:909.05px;top:164.46px;font-size:12px;color:#666;letter-spacing:0.192px;">E-Mail</div>
<div class="t" style="left:909.15px;top:180.01px;font-size:13px;color:#1a1a1a;letter-spacing:-0.107px;">max.mustermaennchen@uni-</div>
<div class="t" style="left:909.28px;top:200.22px;font-size:13px;color:#1a1a1a;letter-spacing:0.026px;">greifswald.de</div>
<div class="t" style="left:1095.77px;top:164.46px;font-size:12px;color:#666;letter-spacing:-0.410px;">Typ</div>
<div class="t" style="left:1095.05px;top:180.01px;font-size:13px;color:#1a1a1a;letter-spacing:-0.125px;">Diverses</div>
<div class="t" style="left:760.35px;top:216.76px;font-size:12px;color:#666;letter-spacing:0.071px;">Firma</div>
<div class="t" style="left:760.35px;top:232.92px;font-size:13px;color:#1a1a1a;letter-spacing:0.200px;">Universität</div>
<div class="t" style="left:760.49px;top:252.11px;font-size:13px;color:#1a1a1a;letter-spacing:0.077px;">Greifswald</div>
<div class="t" style="left:1095.77px;top:216.66px;font-size:12px;color:#666;letter-spacing:0.087px;">Ticketgruppe</div>
<div class="t" style="left:1095.05px;top:233.12px;font-size:13px;color:#1a1a1a;letter-spacing:1.428px;">N/A</div>
<div class="t" style="left:760.35px;top:289.46px;font-size:12px;color:#666;letter-spacing:0.328px;">Kontakt</div>
<div class="t" style="left:760.72px;top:304.61px;font-size:13px;color:#1a1a1a;letter-spacing:0.200px;">Anton Mustermän</div>
<div class="t" style="left:760.35px;top:341.66px;font-size:12px;color:#666;letter-spacing:0.110px;">Eigentümer</div>
<div class="t" style="left:760.72px;top:357.01px;font-size:13px;color:#1a1a1a;letter-spacing:0.200px;">Anton Mustermän</div>
<div class="t" style="left:760.15px;top:405.30px;font-size:15.5px;color:#111;letter-spacing:0.401px;-webkit-text-stroke:.28px #111;">Nachrichten</div>
<div class="t b" style="left:769.70px;top:452.26px;font-size:12px;color:#1a1a1a;font-weight:bold;letter-spacing:-0.327px;">Anton Mustermän</div>
<div class="t" style="left:1043.45px;top:452.06px;font-size:12px;color:#1a1a1a;letter-spacing:0.245px;">18-03-2022 09:39</div>
<div class="t" style="left:769.55px;top:468.41px;font-size:13px;color:#1a1a1a;letter-spacing:0.009px;">Ich habe ein Problem mit einer Anwendung.</div>
<div class="t" style="left:758.71px;top:530.90px;font-size:15.5px;color:#111;letter-spacing:0.827px;-webkit-text-stroke:.28px #111;">Info</div>
<div class="t" style="left:812.20px;top:567.81px;font-size:13px;color:#1a1a1a;letter-spacing:0.401px;">18-03-2022 09:39</div>
<div class="t" style="left:812.95px;top:584.46px;font-size:12px;color:#666;letter-spacing:0.098px;">Erstellt</div>
<div class="t" style="left:1034.70px;top:567.81px;font-size:13px;color:#1a1a1a;letter-spacing:0.443px;">18-03-2022 09:39</div>
<div class="t" style="left:1035.64px;top:584.46px;font-size:12px;color:#666;letter-spacing:0.067px;">Geändert</div>
</div>
</body></html>
